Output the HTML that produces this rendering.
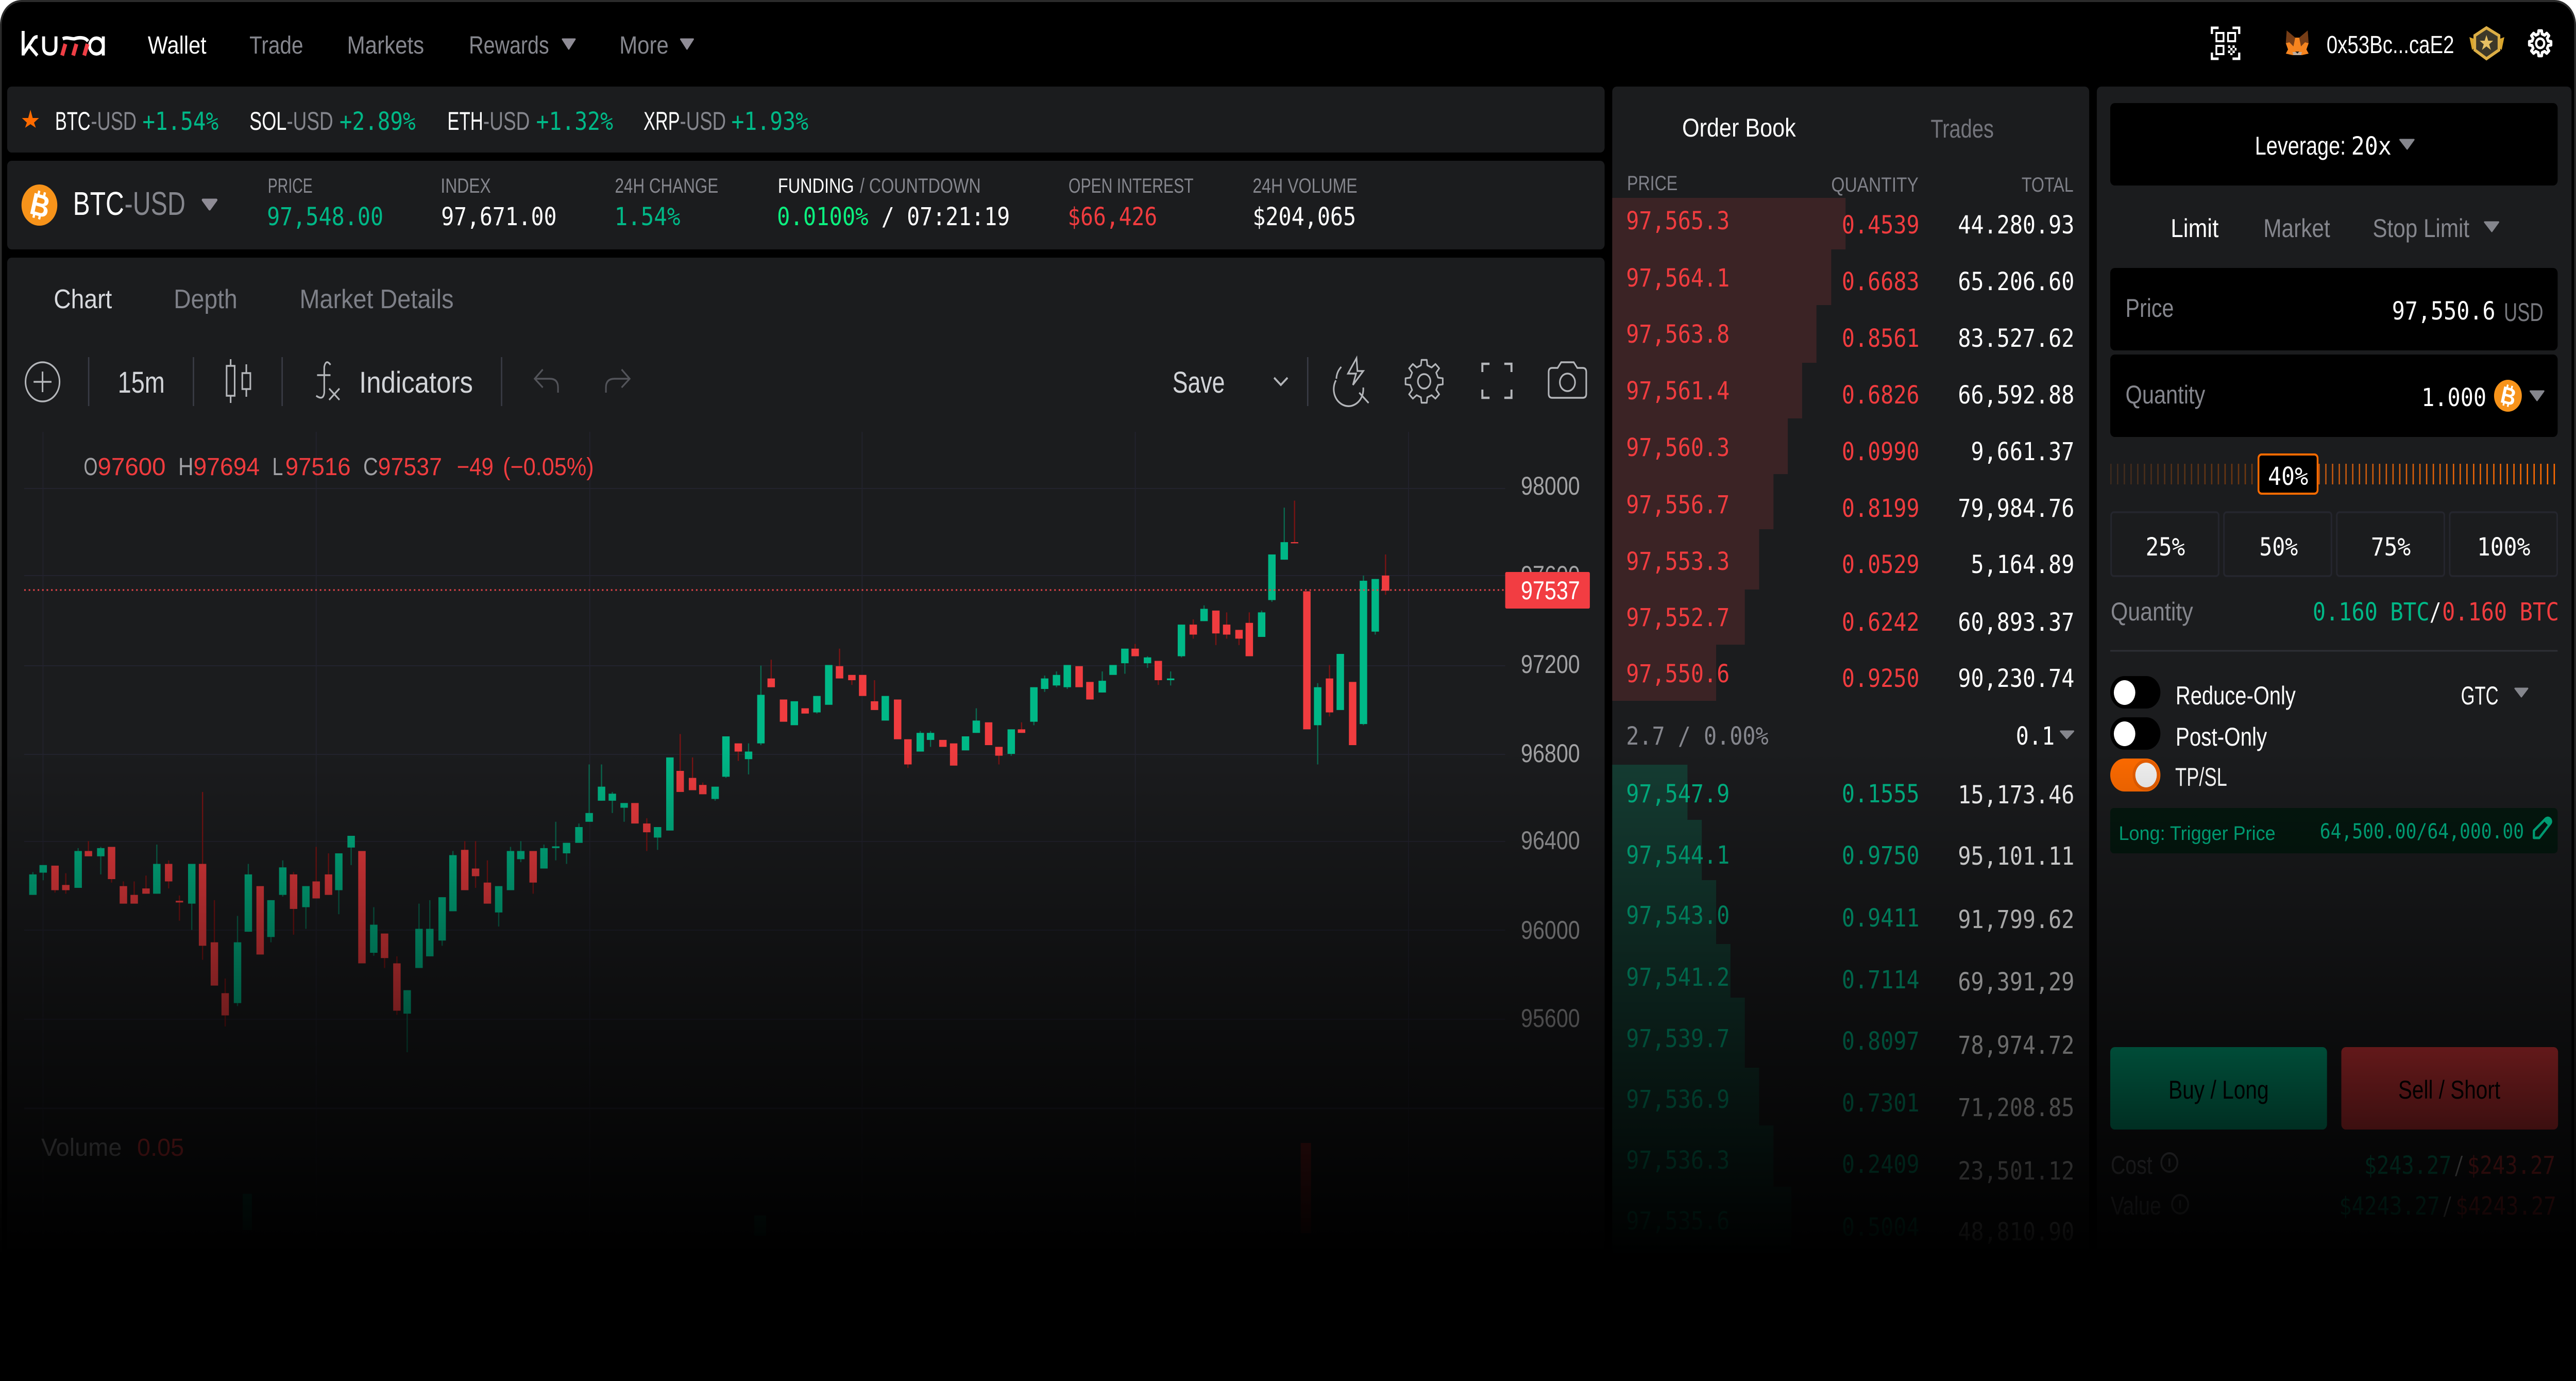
<!DOCTYPE html>
<html lang="en"><head><meta charset="utf-8"><title>Kuma Trade</title>
<style>
html,body{margin:0;padding:0;background:#fff;width:100%;height:100%;overflow:hidden}
svg{display:block;position:absolute;left:0;top:0;width:100%;height:100%}
.s{font-family:"Liberation Sans",sans-serif}
.m{font-family:"DejaVu Sans Mono","Liberation Mono",monospace;font-size:48px}
.g{fill:#00b887}.r{fill:#f03c3f}.w{fill:#fff}.d{fill:#85868d}
.b{fill:#1b1c1e}.k{fill:#000}
text{white-space:pre}
</style></head><body>
<svg xmlns="http://www.w3.org/2000/svg" viewBox="0 0 5752 2680" preserveAspectRatio="none">
<defs>
<linearGradient id="fade" gradientUnits="userSpaceOnUse" x1="0" y1="1450" x2="0" y2="2440"><stop offset="0" stop-color="#000" stop-opacity="0"/><stop offset="1" stop-color="#000" stop-opacity="1"/></linearGradient>
<linearGradient id="tick" gradientUnits="userSpaceOnUse" x1="4712" y1="0" x2="5711" y2="0"><stop offset="0" stop-color="#3c2a1e"/><stop offset=".33" stop-color="#74390f"/><stop offset=".47" stop-color="#c05710"/><stop offset="1" stop-color="#ff6b00"/></linearGradient>
<polygon id="gear" fill="none" stroke-linejoin="round" points="-17,-74 -14,-99 14,-99 17,-74 40,-64 60,-80 80,-60 64,-40 74,-17 99,-14 99,14 74,17 64,40 80,60 60,80 40,64 17,74 14,99 -14,99 -17,74 -40,64 -60,80 -80,60 -64,40 -74,17 -99,14 -99,-14 -74,-17 -64,-40 -80,-60 -60,-80 -40,-64"/>
</defs>
<path d="M0 2680V48A48 48 0 0 1 48 0H5704A48 48 0 0 1 5752 48V2680Z" fill="#2b2b2b"/>
<path d="M4 2680V48A44 44 0 0 1 48 4H5704A44 44 0 0 1 5748 48V2680Z" fill="#000"/>

<!-- logo -->
<g transform="scale(.33333)" fill="none" stroke="#fff" stroke-width="20">
<path d="M155 180V323"/><path d="M158 312L222 228Q232 214 252 214M196 268L250 323"/>
<path d="M292 212V272Q292 314 334 314Q375 314 375 272V212"/>
<path d="M420 226Q440 218 462 222Q485 226 498 226Q530 216 560 222Q578 226 590 240"/>
<circle cx="646" cy="268" r="46"/><path d="M692 212V323"/>
<path d="M438 256L416 323M512 256L490 323M586 256L564 323" stroke="#ef3e45" stroke-width="26"/>
</g>
<!-- nav -->
<g class="s" font-size="48">
<text x="330" y="104" class="w" textLength="131" lengthAdjust="spacingAndGlyphs">Wallet</text>
<text x="557" y="104" class="d" textLength="120" lengthAdjust="spacingAndGlyphs">Trade</text>
<text x="775" y="104" class="d" textLength="172" lengthAdjust="spacingAndGlyphs">Markets</text>
<text x="1047" y="104" class="d" textLength="179" lengthAdjust="spacingAndGlyphs">Rewards</text>
<text x="1383" y="104" class="d" textLength="110" lengthAdjust="spacingAndGlyphs">More</text>
</g>
<path d="M1256 76H1284L1270 95ZM1520 76H1548L1534 95Z" fill="#8f8c96" stroke="#8f8c96" stroke-width="3" stroke-linejoin="round"/>
<!-- top right -->
<g fill="none" stroke="#fff" stroke-width="4">
<path d="M4939 66V54H4954M4985 54H5000V66M4939 102V114H4954M5000 102V114H4985" stroke-width="5"/>
<rect x="4949" y="64" width="16" height="16"/><rect x="4975" y="64" width="16" height="16"/><rect x="4949" y="89" width="16" height="16"/>
</g>
<path d="M4975 88h5v5h-5zM4985 88h5v5h-5zM4980 93h5v5h-5zM4990 93h4v5h-4zM4975 98h5v5h-5zM4985 98h5v5h-5zM4980 103h5v4h-5z" fill="#fff"/>
<g>
<path d="M5106 59L5125 73L5121 90L5104 84Z" fill="#763d16"/><path d="M5153 59L5134 73L5138 90L5155 84Z" fill="#763d16"/>
<path d="M5125 73H5134L5138 90L5147 82L5155 84L5150 96L5155 104L5140 107H5119L5104 104L5109 96L5104 84L5112 82L5121 90Z" fill="#f5841f"/>
<path d="M5119 101H5140L5138 107L5130 107L5121 107Z" fill="#c0ad9e"/><path d="M5125 100H5134L5130 104Z" fill="#222"/>
</g>
<text x="5195" y="103" class="s w" font-size="48" textLength="285" lengthAdjust="spacingAndGlyphs">0x53Bc...caE2</text>
<g>
<path d="M5514 72L5526 76V92L5520 97ZM5592 72L5580 76V92L5586 97Z" fill="#d9a52c"/>
<polygon points="5552,54 5580,69 5580,97 5552,114 5526,97 5526,69" fill="#3d3829" stroke="#dcae45" stroke-width="6"/>
<polygon points="5552,68 5556,79 5567,79 5558,86 5562,97 5552,90 5542,97 5546,86 5537,79 5548,79" fill="#e7c063"/>
</g>
<use href="#gear" transform="translate(5672,84) scale(.245)" stroke="#fff" stroke-width="24"/>
<circle cx="5672" cy="84" r="9" fill="none" stroke="#fff" stroke-width="5"/>

<!-- panels -->
<rect x="16" y="168" width="3567" height="128" rx="10" class="b"/>
<rect x="16" y="312" width="3567" height="172" rx="10" class="b"/>
<rect x="16" y="500" width="3567" height="2180" rx="10" class="b"/>
<rect x="3600" y="168" width="1065" height="2512" rx="10" class="b"/>
<rect x="4682" y="168" width="1060" height="2512" rx="10" class="b"/>

<!-- ticker -->
<polygon points="68,213 73,229 87,229 76,238 80,248 68,241 56,248 60,238 49,229 63,229" fill="#ff6b00"/>
<g class="s" font-size="50">
<text x="123" y="252" class="w" textLength="79" lengthAdjust="spacingAndGlyphs">BTC</text><text x="203" y="252" class="d" textLength="102" lengthAdjust="spacingAndGlyphs">-USD</text>
<text x="557" y="252" class="w" textLength="83" lengthAdjust="spacingAndGlyphs">SOL</text><text x="640" y="252" class="d" textLength="104" lengthAdjust="spacingAndGlyphs">-USD</text>
<text x="999" y="252" class="w" textLength="80" lengthAdjust="spacingAndGlyphs">ETH</text><text x="1079" y="252" class="d" textLength="104" lengthAdjust="spacingAndGlyphs">-USD</text>
<text x="1437" y="252" class="w" textLength="81" lengthAdjust="spacingAndGlyphs">XRP</text><text x="1518" y="252" class="d" textLength="103" lengthAdjust="spacingAndGlyphs">-USD</text>
</g>
<g class="m g">
<text x="318" y="252" textLength="170" lengthAdjust="spacingAndGlyphs">+1.54%</text>
<text x="758" y="252" textLength="170" lengthAdjust="spacingAndGlyphs">+2.89%</text>
<text x="1197" y="252" textLength="172" lengthAdjust="spacingAndGlyphs">+1.32%</text>
<text x="1633" y="252" textLength="172" lengthAdjust="spacingAndGlyphs">+1.93%</text>
</g>

<!-- market bar -->
<circle cx="88" cy="398" r="40" fill="#f7931a"/>
<g transform="translate(88,398) rotate(14)"><text x="-20" y="21" class="s w" font-size="60" font-weight="700">B</text><path d="M-7 -27V-20M6 -27V-20M-7 20V27M6 20V27" stroke="#fff" stroke-width="5"/></g>
<text x="163" y="417" class="s w" font-size="64" textLength="114" lengthAdjust="spacingAndGlyphs">BTC</text>
<text x="278" y="417" class="s d" font-size="64" textLength="136" lengthAdjust="spacingAndGlyphs">-USD</text>
<path d="M453 388H483L468 406Z" fill="#8f8c96" stroke="#8f8c96" stroke-width="5" stroke-linejoin="round"/>
<g class="s d" font-size="40">
<text x="598" y="374" textLength="100" lengthAdjust="spacingAndGlyphs">PRICE</text>
<text x="984" y="374" textLength="112" lengthAdjust="spacingAndGlyphs">INDEX</text>
<text x="1373" y="374" textLength="231" lengthAdjust="spacingAndGlyphs">24H CHANGE</text>
<text x="1737" y="374" class="w" textLength="170" lengthAdjust="spacingAndGlyphs">FUNDING</text>
<text x="1920" y="374" textLength="270" lengthAdjust="spacingAndGlyphs">/ COUNTDOWN</text>
<text x="2386" y="374" textLength="279" lengthAdjust="spacingAndGlyphs">OPEN INTEREST</text>
<text x="2797" y="374" textLength="234" lengthAdjust="spacingAndGlyphs">24H VOLUME</text>
</g>
<g class="m">
<text x="596" y="437" class="g" textLength="260" lengthAdjust="spacingAndGlyphs">97,548.00</text>
<text x="985" y="437" class="w" textLength="258" lengthAdjust="spacingAndGlyphs">97,671.00</text>
<text x="1372" y="437" class="g" textLength="147" lengthAdjust="spacingAndGlyphs">1.54%</text>
<text x="1735" y="437" fill="#0cf07f" textLength="204" lengthAdjust="spacingAndGlyphs">0.0100%</text>
<text x="1968" y="437" class="w">/</text>
<text x="2025" y="437" class="w" textLength="230" lengthAdjust="spacingAndGlyphs">07:21:19</text>
<text x="2384" y="437" class="r" textLength="200" lengthAdjust="spacingAndGlyphs">$66,426</text>
<text x="2797" y="437" class="w" textLength="231" lengthAdjust="spacingAndGlyphs">$204,065</text>
</g>

<!-- chart tabs -->
<g class="s" font-size="52">
<text x="120" y="598" fill="#d8dade" textLength="130" lengthAdjust="spacingAndGlyphs">Chart</text>
<text x="388" y="598" fill="#7e8088" textLength="142" lengthAdjust="spacingAndGlyphs">Depth</text>
<text x="669" y="598" fill="#7e8088" textLength="344" lengthAdjust="spacingAndGlyphs">Market Details</text>
</g>
<!-- toolbar -->
<path d="M198 693V788M432 693V788M630 693V788M1120 693V788M2920 693V788" stroke="#3a3c46" stroke-width="3"/>
<g fill="none" stroke="#b4b6ba" stroke-width="3.5">
<circle cx="95" cy="741" r="38"/><path d="M75 741H115M95 721V761"/>
<path d="M515 697V782M550 707V770"/><rect x="506" y="710" width="18" height="58" fill="#1b1c1e"/><rect x="541" y="724" width="18" height="31" fill="#1b1c1e"/>
<path d="M738 708Q728 696 724 712V762Q722 778 706 768M708 728H738M735 754L758 776M758 754L735 776"/>
<path d="M2983 738A33 33 0 1 0 3044 752M2995 712A33 33 0 0 0 2984 735" />
<path d="M3029 695L3010 725H3028L3021 747L3044 720H3031Z"/>
<path d="M3035 762L3056 782"/>
<use href="#gear" transform="translate(3180,740) scale(.42)" stroke-width="8"/>
<circle cx="3180" cy="740" r="14"/>
<path d="M3310 722V706H3326M3359 706H3375V722M3310 756V772H3326M3359 772H3375V756" stroke-width="4.5"/>
<path d="M3458 722Q3458 714 3466 714H3478L3486 703H3514L3522 714H3534Q3542 714 3542 722V764Q3542 772 3534 772H3466Q3458 772 3458 764Z"/>
<ellipse cx="3500" cy="742" rx="17" ry="17"/>
</g>
<g fill="none" stroke="#53545a" stroke-width="3.5"><path d="M1212 717L1194 735L1212 752M1194 735H1228Q1246 735 1246 752V762"/><path d="M1388 717L1406 735L1388 752M1406 735H1372Q1353 735 1353 752V762"/></g>
<path d="M2845 733L2860 747L2875 733" fill="none" stroke="#b4b6ba" stroke-width="4"/>
<g class="s" fill="#d2d4d8" font-size="58">
<text x="263" y="762" textLength="105" lengthAdjust="spacingAndGlyphs">15m</text>
<text x="802" y="762" textLength="254" lengthAdjust="spacingAndGlyphs">Indicators</text>
<text x="2618" y="762" textLength="117" lengthAdjust="spacingAndGlyphs">Save</text>
</g>

<!-- grid -->
<path d="M54 948H3361M54 1117H3361M54 1292H3361M54 1464H3361M54 1633H3361M54 1805H3361M54 1978H3361M96 838V2500M706 838V2500M1317 838V2500M1925 838V2500M2535 838V2500M3145 838V2500" stroke="#23232e" stroke-width="2" fill="none"/>
<path d="M54 2151H3582" stroke="#2a2a36" stroke-width="3"/>

<!-- OHLC -->
<g class="s" font-size="48">
<g fill="#a0a0a4"><text x="187" y="922" textLength="31" lengthAdjust="spacingAndGlyphs">O</text><text x="398" y="922" textLength="34" lengthAdjust="spacingAndGlyphs">H</text><text x="608" y="922" textLength="24" lengthAdjust="spacingAndGlyphs">L</text><text x="811" y="922" textLength="33" lengthAdjust="spacingAndGlyphs">C</text></g>
<g class="r"><text x="218" y="922" textLength="152" lengthAdjust="spacingAndGlyphs">97600</text><text x="432" y="922" textLength="148" lengthAdjust="spacingAndGlyphs">97694</text><text x="637" y="922" textLength="146" lengthAdjust="spacingAndGlyphs">97516</text><text x="844" y="922" textLength="143" lengthAdjust="spacingAndGlyphs">97537</text><text x="1020" y="922" textLength="82" lengthAdjust="spacingAndGlyphs">−49</text><text x="1123" y="922" textLength="203" lengthAdjust="spacingAndGlyphs">(−0.05%)</text></g>
</g>

<!-- candles -->
<g transform="translate(0,900) scale(1.148,1.1352)" fill="none">
<path stroke="#0a6a50" stroke-width="2.4" d="M64 698V737M84 686V712M152 657V725M196 655V702M305 651V735M373 684V797M462 773V927M483 684V800M527 746V818M550 678V740M595 722V795M659 666V770M683 636V686M727 758V841M792 900V1006M815 752V862M836 746V842M860 741V824M881 662V765M970 722V791M993 655V729M1013 645V681M1058 651V692M1081 612V678M1102 648V684M1126 615V648M1146 514V612M1170 514V576M1191 561V597M1214 580V612M1279 621V660M1391 552V576M1412 466V537M1456 478V531M1480 345V481"/>
<path stroke="#7a1414" stroke-width="2.4" d="M107 687V733M128 700V735M172 645V671M217 655V716M240 714V752M261 714V752M284 704V735M328 678V726M349 738V781M394 561V848M417 746V892M438 880V962M571 698V805M615 655V743M639 666V737M748 803V862M772 842V942M904 645V729M925 645V725M948 678V752M1037 662V735M1258 606V662M1323 462V561M1347 502V558M1367 545V565M1436 478V508M1500 335V382"/>
<path stroke="#00b887" stroke-width="14.5" d="M64 702V737M84 686V699M152 662V725M196 657V671M305 684V735M373 684V752M462 818V922M483 702V800M527 746V809M550 690V737M595 722V758M659 666V729M683 636V656M727 788V836M792 900V940M815 795V862M836 795V842M860 741V815M881 669V765M970 722V767M993 662V729M1013 662V676M1058 657V692M1102 648V666M1126 621V648M1146 597V612M1170 552V576M1191 564V576M1214 580V588M1279 621V639M1303 502V627M1391 552V573M1412 466V535M1456 492V505M1480 395V478M1545 406V447"/>
<path stroke="#00b887" stroke-width="14.5" d="M1081 654V657"/>
<path stroke="#f03c3f" stroke-width="14.5" d="M107 687V729M128 720V729M172 662V671M217 655V710M240 722V752M261 737V752M284 726V735M328 684V714M349 747V750M394 684V824M417 818V892M438 905V943M506 722V839M571 702V761M615 714V743M639 702V737M704 662V854M748 803V845M772 854V935M904 660V729M925 692V705M948 716V752M1037 662V716M1235 580V615M1258 615V630M1323 525V561M1347 537V558M1367 549V565M1436 478V492M1500 367V382M1524 403V441M1566 418V427"/>
<path d="M472 1248h18v62h-18zM1467 1285h23v35h-23z" fill="#0a5c46" stroke="none"/>
</g>
<g transform="translate(1800,900) scale(1.148,1.1352)" fill="none">
<path stroke="#0a6a50" stroke-width="2.4" d="M21 397V427M222 457V492M242 457V484M331 418V460M399 454V499M443 382V447M464 362V390M487 355V382M508 344V385M576 355V391M620 316V359M664 329V349M709 355V379M730 275V331M774 242V269M886 251V296M906 155V236M930 75V164M995 375V514M1084 191V447M1107 197V292"/>
<path stroke="#7a1414" stroke-width="2.4" d="M65 316V367M89 361V378M133 370V421M198 471V520M375 484V514M419 442V460M640 308V329M685 337V378M753 266V299M797 251V310M818 254V299M842 284V310M862 254V329M950 63V136M1018 344V432M1127 155V224"/>
<path stroke="#00b887" stroke-width="14.5" d="M21 397V425M44 344V412M154 397V439M222 460V492M242 460V472M310 466V490M331 439V460M399 454V496M443 382V441M464 367V385M487 361V379M508 344V382M576 371V391M597 344V361M620 316V341M664 331V341M709 367V370M730 275V329M774 248V269M886 254V296M906 155V233M930 134V164M995 382V447M1039 325V421M1084 200V445M1107 197V287"/>
<path stroke="#f03c3f" stroke-width="14.5" d="M65 346V367M89 361V370M110 361V397M133 406V421M178 403V471M198 471V514M266 472V484M287 478V516M355 442V481M375 484V499M419 454V460M531 346V382M552 373V403M640 316V329M685 337V370M753 275V292M797 251V290M818 275V292M842 284V299M862 272V329M950 134V136M974 218V454M1018 367V425M1063 373V481M1127 191V217"/>
<path d="M962 1161h20v154h-20z" fill="#7a2020" stroke="none"/>
</g>
<!-- axis -->
<g class="s" fill="#a2a2a4" font-size="50">
<text x="3396" y="960" textLength="132" lengthAdjust="spacingAndGlyphs">98000</text>
<text x="3396" y="1133" textLength="132" lengthAdjust="spacingAndGlyphs">97600</text>
<text x="3396" y="1306" textLength="132" lengthAdjust="spacingAndGlyphs">97200</text>
<text x="3396" y="1479" textLength="132" lengthAdjust="spacingAndGlyphs">96800</text>
<text x="3396" y="1648" textLength="132" lengthAdjust="spacingAndGlyphs">96400</text>
<text x="3396" y="1822" textLength="132" lengthAdjust="spacingAndGlyphs">96000</text>
<text x="3396" y="1993" textLength="132" lengthAdjust="spacingAndGlyphs">95600</text>
</g>
<path d="M54 1145H3361" stroke="#e8454a" stroke-width="3" stroke-dasharray="3.5 6.5"/>
<rect x="3361" y="1110" width="189" height="71" rx="3" fill="#f23d42"/>
<text x="3396" y="1163" class="s w" font-size="50" textLength="132" lengthAdjust="spacingAndGlyphs">97537</text>
<g class="s" font-size="48"><text x="92" y="2243" fill="#9a9a9e" textLength="180" lengthAdjust="spacingAndGlyphs">Volume</text><text x="306" y="2243" class="r" textLength="105" lengthAdjust="spacingAndGlyphs">0.05</text></g>

<!-- order book -->
<text x="3756" y="265" class="s w" font-size="50" textLength="254" lengthAdjust="spacingAndGlyphs">Order Book</text>
<text x="4311" y="267" class="s" fill="#74757c" font-size="50" textLength="141" lengthAdjust="spacingAndGlyphs">Trades</text>
<g class="s" fill="#7f8088" font-size="40">
<text x="3633" y="369" textLength="113" lengthAdjust="spacingAndGlyphs">PRICE</text>
<text x="4089" y="372" textLength="195" lengthAdjust="spacingAndGlyphs">QUANTITY</text>
<text x="4514" y="372" textLength="116" lengthAdjust="spacingAndGlyphs">TOTAL</text>
</g>
<path fill="#3b2325" d="M3600 384H4121V484H4089V592H4056V704H4024V812H3992V920H3960V1027H3928V1144H3896V1251H3832V1360H3600Z"/>
<path fill="#153d33" d="M3600 1484H3768V1591H3800V1708H3832V1832H3864V1936H3896V2072H3928V2184H3960V2303H4000V2440H3600Z"/>
<g class="m r">
<text x="3631" y="445">97,565.3</text><text x="3631" y="556">97,564.1</text><text x="3631" y="665">97,563.8</text><text x="3631" y="775">97,561.4</text><text x="3631" y="885">97,560.3</text><text x="3631" y="996">97,556.7</text><text x="3631" y="1106">97,553.3</text><text x="3631" y="1215">97,552.7</text><text x="3631" y="1324">97,550.6</text>
</g>
<g class="m r" text-anchor="end">
<text x="4286" y="453">0.4539</text><text x="4286" y="563">0.6683</text><text x="4286" y="673">0.8561</text><text x="4286" y="783">0.6826</text><text x="4286" y="893">0.0990</text><text x="4286" y="1003">0.8199</text><text x="4286" y="1112">0.0529</text><text x="4286" y="1224">0.6242</text><text x="4286" y="1333">0.9250</text>
</g>
<g class="m w" text-anchor="end">
<text x="4632" y="453">44.280.93</text><text x="4632" y="563">65.206.60</text><text x="4632" y="673">83.527.62</text><text x="4632" y="783">66,592.88</text><text x="4632" y="893">9,661.37</text><text x="4632" y="1003">79,984.76</text><text x="4632" y="1112">5,164.89</text><text x="4632" y="1224">60,893.37</text><text x="4632" y="1333">90,230.74</text>
</g>
<text x="3631" y="1445" class="m d">2.7 / 0.00%</text>
<text x="4588" y="1445" class="m w" text-anchor="end">0.1</text>
<path d="M4601 1419H4630L4615 1433Z" fill="#85868d" stroke="#85868d" stroke-width="3" stroke-linejoin="round"/>
<g class="m g">
<text x="3631" y="1557">97,547.9</text><text x="3631" y="1676">97,544.1</text><text x="3631" y="1793">97,543.0</text><text x="3631" y="1913">97,541.2</text><text x="3631" y="2032">97,539.7</text><text x="3631" y="2150">97,536.9</text><text x="3631" y="2268">97,536.3</text><text x="3631" y="2386">97,535.6</text>
</g>
<g class="m g" text-anchor="end">
<text x="4286" y="1557">0.1555</text><text x="4286" y="1677">0.9750</text><text x="4286" y="1798">0.9411</text><text x="4286" y="1918">0.7114</text><text x="4286" y="2037">0.8097</text><text x="4286" y="2157">0.7301</text><text x="4286" y="2276">0.2409</text><text x="4286" y="2398">0.5004</text>
</g>
<g class="m w" text-anchor="end">
<text x="4632" y="1559">15,173.46</text><text x="4632" y="1678">95,101.11</text><text x="4632" y="1801">91,799.62</text><text x="4632" y="1922">69,391,29</text><text x="4632" y="2045">78,974.72</text><text x="4632" y="2166">71,208.85</text><text x="4632" y="2289">23,501.12</text><text x="4632" y="2407">48,810.90</text>
</g>

<!-- order form -->
<rect x="4712" y="200" width="999" height="160" rx="10" class="k"/>
<text x="5035" y="300" class="s w" font-size="50" textLength="203" lengthAdjust="spacingAndGlyphs">Leverage:</text>
<text x="5250" y="300" class="m w" textLength="90" lengthAdjust="spacingAndGlyphs">20x</text>
<path d="M5359 271H5390L5375 289Z" fill="#85868d" stroke="#85868d" stroke-width="3" stroke-linejoin="round"/>
<g class="s" font-size="50">
<text x="4847" y="460" class="w" textLength="107" lengthAdjust="spacingAndGlyphs">Limit</text>
<text x="5054" y="460" class="d" textLength="149" lengthAdjust="spacingAndGlyphs">Market</text>
<text x="5298" y="460" class="d" textLength="216" lengthAdjust="spacingAndGlyphs">Stop Limit</text>
</g>
<path d="M5548 431H5579L5564 449Z" fill="#85868d" stroke="#85868d" stroke-width="3" stroke-linejoin="round"/>
<rect x="4712" y="520" width="999" height="160" rx="10" class="k"/>
<rect x="4712" y="688" width="999" height="160" rx="10" class="k"/>
<text x="4746" y="615" class="s d" font-size="50" textLength="108" lengthAdjust="spacingAndGlyphs">Price</text>
<text x="5341" y="620" class="m w" textLength="231" lengthAdjust="spacingAndGlyphs">97,550.6</text>
<text x="5591" y="623" class="s" fill="#77787e" font-size="50" textLength="88" lengthAdjust="spacingAndGlyphs">USD</text>
<text x="4746" y="783" class="s d" font-size="50" textLength="178" lengthAdjust="spacingAndGlyphs">Quantity</text>
<text x="5407" y="788" class="m w" textLength="145" lengthAdjust="spacingAndGlyphs">1.000</text>
<circle cx="5600" cy="768" r="31" fill="#f7931a"/>
<g transform="translate(5600,768) rotate(14) scale(.775)"><text x="-20" y="21" class="s w" font-size="60" font-weight="700">B</text><path d="M-7 -27V-20M6 -27V-20M-7 20V27M6 20V27" stroke="#fff" stroke-width="5"/></g>
<path d="M5650 759H5680L5665 777Z" fill="#85868d" stroke="#85868d" stroke-width="3" stroke-linejoin="round"/>
<path d="M4712 920H5711" stroke="url(#tick)" stroke-width="40" stroke-dasharray="3 12"/>
<rect x="5043" y="882" width="132" height="76" rx="7" fill="#000" stroke="#ff6b00" stroke-width="4"/>
<text x="5064" y="941" class="m w" textLength="90" lengthAdjust="spacingAndGlyphs">40%</text>
<g fill="none" stroke="#25262e" stroke-width="3.5">
<rect x="4714" y="994" width="240" height="124" rx="6"/><rect x="4966" y="994" width="240" height="124" rx="6"/><rect x="5218" y="994" width="240" height="124" rx="6"/><rect x="5470" y="994" width="240" height="124" rx="6"/>
</g>
<g class="m w">
<text x="4791" y="1078" textLength="88" lengthAdjust="spacingAndGlyphs">25%</text>
<text x="5045" y="1078" textLength="86" lengthAdjust="spacingAndGlyphs">50%</text>
<text x="5294" y="1078" textLength="89" lengthAdjust="spacingAndGlyphs">75%</text>
<text x="5531" y="1078" textLength="119" lengthAdjust="spacingAndGlyphs">100%</text>
</g>
<text x="4713" y="1204" class="s d" font-size="50" textLength="184" lengthAdjust="spacingAndGlyphs">Quantity</text>
<g class="m">
<text x="5164" y="1204" class="g" textLength="145" lengthAdjust="spacingAndGlyphs">0.160</text>
<text x="5337" y="1204" class="g" textLength="88" lengthAdjust="spacingAndGlyphs">BTC</text>
<text x="5425" y="1204" class="w" textLength="26" lengthAdjust="spacingAndGlyphs">/</text>
<text x="5453" y="1204" class="r" textLength="145" lengthAdjust="spacingAndGlyphs">0.160</text>
<text x="5626" y="1204" class="r" textLength="88" lengthAdjust="spacingAndGlyphs">BTC</text>
</g>
<path d="M4712 1263H5711" stroke="#2e2f36" stroke-width="3"/>
<rect x="4712" y="1312" width="112" height="63" rx="31.5" class="k"/><circle cx="4744" cy="1344" r="24" class="w"/>
<rect x="4712" y="1392" width="112" height="63" rx="31.5" class="k"/><circle cx="4744" cy="1424" r="24" class="w"/>
<rect x="4712" y="1472" width="112" height="64" rx="32" fill="#ff6b00"/><circle cx="4792" cy="1504" r="30" fill="#e85f00"/><circle cx="4792" cy="1504" r="24" fill="#f4f4f4"/>
<g class="s w" font-size="50">
<text x="4858" y="1367" textLength="268" lengthAdjust="spacingAndGlyphs">Reduce-Only</text>
<text x="4858" y="1447" textLength="204" lengthAdjust="spacingAndGlyphs">Post-Only</text>
<text x="4857" y="1525" textLength="116" lengthAdjust="spacingAndGlyphs">TP/SL</text>
<text x="5495" y="1367" textLength="84" lengthAdjust="spacingAndGlyphs">GTC</text>
</g>
<path d="M5616 1336H5644L5630 1352Z" fill="#85868d" stroke="#85868d" stroke-width="3" stroke-linejoin="round"/>
<rect x="4712" y="1568" width="999" height="88" rx="8" fill="#04180f"/>
<text x="4731" y="1630" class="s g" font-size="38" textLength="350" lengthAdjust="spacingAndGlyphs">Long: Trigger Price</text>
<text x="5180" y="1627" class="m g" style="font-size:40px" textLength="456" lengthAdjust="spacingAndGlyphs">64,500.00/64,000.00</text>
<path d="M5658 1626V1612L5684 1589Q5690 1585 5695 1590Q5698 1595 5694 1599L5670 1626Z" fill="none" stroke="#00b887" stroke-width="5" stroke-linejoin="round"/>
<path d="M5684 1589Q5690 1585 5695 1590Q5698 1595 5694 1599L5690 1602L5680 1593Z" fill="#00b887"/>
<rect x="4712" y="2032" width="484" height="160" rx="10" fill="#00b887"/>
<rect x="5228" y="2032" width="484" height="160" rx="10" fill="#f03c3f"/>
<text x="4842" y="2132" class="s k" font-size="50" textLength="224" lengthAdjust="spacingAndGlyphs">Buy / Long</text>
<text x="5355" y="2132" class="s k" font-size="50" textLength="228" lengthAdjust="spacingAndGlyphs">Sell / Short</text>
<g class="s d" font-size="50"><text x="4713" y="2278" textLength="93" lengthAdjust="spacingAndGlyphs">Cost</text><text x="4713" y="2357" textLength="113" lengthAdjust="spacingAndGlyphs">Value</text></g>
<g fill="none" stroke="#85868d" stroke-width="4"><circle cx="4844" cy="2256" r="18"/><path d="M4844 2248V2264"/><circle cx="4868" cy="2337" r="18"/><path d="M4868 2329V2345"/></g>
<g class="m">
<text x="5279" y="2278" class="g" textLength="195" lengthAdjust="spacingAndGlyphs">$243.27</text>
<text x="5480" y="2278" class="w" textLength="22" lengthAdjust="spacingAndGlyphs">/</text>
<text x="5509" y="2278" class="r" textLength="197" lengthAdjust="spacingAndGlyphs">$243.27</text>
<text x="5223" y="2357" class="g" textLength="225" lengthAdjust="spacingAndGlyphs">$4243.27</text>
<text x="5454" y="2357" class="w" textLength="22" lengthAdjust="spacingAndGlyphs">/</text>
<text x="5483" y="2357" class="r" textLength="225" lengthAdjust="spacingAndGlyphs">$4243.27</text>
</g>

<!-- bottom fade -->
<rect x="0" y="1450" width="5752" height="1230" fill="url(#fade)"/>
</svg>
</body></html>
